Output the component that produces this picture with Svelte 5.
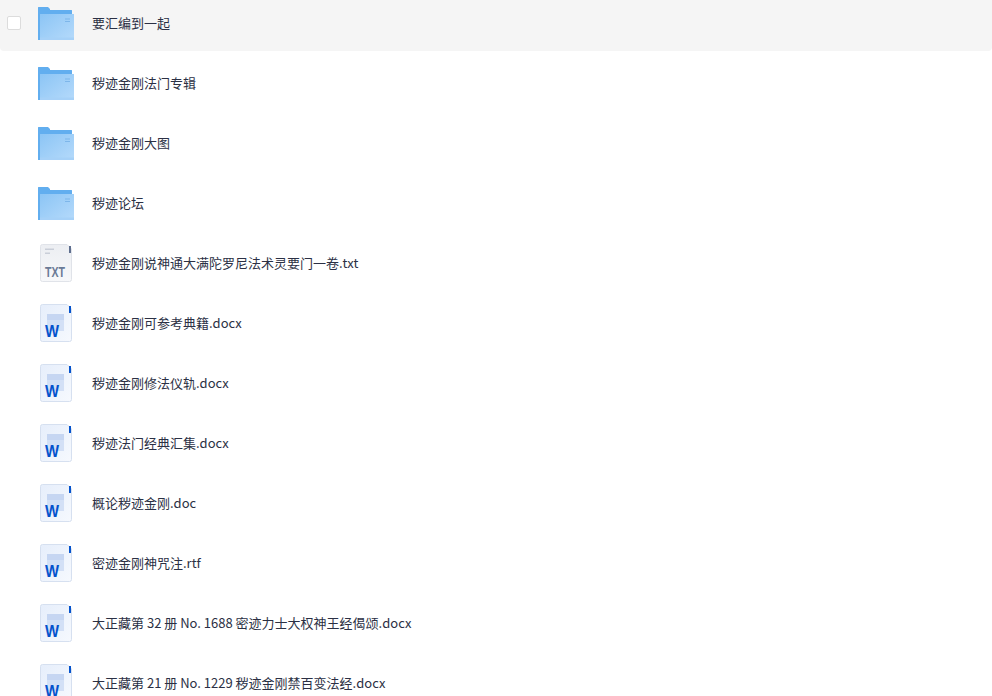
<script>
    const files = [
        { name: "要汇编到一起", type: "folder", hover: true },
        { name: "秽迹金刚法门专辑", type: "folder" },
        { name: "秽迹金刚大图", type: "folder" },
        { name: "秽迹论坛", type: "folder" },
        { name: "秽迹金刚说神通大满陀罗尼法术灵要门一卷.txt", type: "txt" },
        { name: "秽迹金刚可参考典籍.docx", type: "word" },
        { name: "秽迹金刚修法仪轨.docx", type: "word" },
        { name: "秽迹法门经典汇集.docx", type: "word" },
        { name: "概论秽迹金刚.doc", type: "word" },
        { name: "密迹金刚神咒注.rtf", type: "word" },
        { name: "大正藏第 32 册 No. 1688 密迹力士大权神王经偈颂.docx", type: "word" },
        { name: "大正藏第 21 册 No. 1229 秽迹金刚禁百变法经.docx", type: "word" }
    ];
</script>

<main>
    <svg class="defs" width="0" height="0" aria-hidden="true">
        <defs>
            <linearGradient id="folderFront" x1="0" y1="0" x2="1" y2="1">
                <stop offset="0" stop-color="#8cc5f5" />
                <stop offset="1" stop-color="#b5dafb" />
            </linearGradient>
            <linearGradient id="txtPage" x1="0" y1="0" x2="0" y2="1">
                <stop offset="0" stop-color="#eceef2" />
                <stop offset="1" stop-color="#f7f8fa" />
            </linearGradient>
            <linearGradient id="wordPage" x1="0" y1="0" x2="1" y2="1">
                <stop offset="0" stop-color="#e6eefb" />
                <stop offset="1" stop-color="#f6f9fe" />
            </linearGradient>
        </defs>
    </svg>

    <ul class="list">
        {#each files as file}
            <li class="row" class:hover={file.hover}>
                <span class="check-cell">
                    {#if file.hover}
                        <span class="check"></span>
                    {/if}
                </span>

                <span class="icon">
                    {#if file.type === "folder"}
                        <svg width="40" height="40" viewBox="0 0 40 40">
                            <path d="M2 4.500 Q2 4 2.500 4 H12 L14 6 V7 H35.500 Q36 7 36 7.500 V37 H2 Z" fill="#62aeef" />
                            <rect x="4" y="11" width="34" height="26" fill="url(#folderFront)" />
                            <rect x="4" y="34.500" width="34" height="2.500" fill="#a6d1f8" />
                            <rect x="29" y="15.500" width="5" height="1" fill="#7db6ea" />
                            <rect x="29" y="18" width="5" height="1" fill="#7db6ea" />
                        </svg>
                    {:else if file.type === "txt"}
                        <svg width="40" height="40" viewBox="0 0 40 40">
                            <path d="M4.500 3.500 Q4.500 1.500 6.500 1.500 H31 L35.500 6 V36.500 Q35.500 38.500 33.500 38.500 H6.500 Q4.500 38.500 4.500 36.500 Z" fill="url(#txtPage)" stroke="#e0e3e9" />
                            <rect x="9" y="5.500" width="9" height="1.500" fill="#c9ced8" />
                            <rect x="9" y="9.500" width="5" height="1.500" fill="#c9ced8" />
                            <rect x="33" y="3" width="2" height="7" fill="#5f6f8f" />
                            <text class="txt-label" x="9" y="34" textLength="20" lengthAdjust="spacingAndGlyphs">TXT</text>
                        </svg>
                    {:else}
                        <svg width="40" height="40" viewBox="0 0 40 40">
                            <path d="M4.500 3.500 Q4.500 1.500 6.500 1.500 H31 L35.500 6 V36.500 Q35.500 38.500 33.500 38.500 H6.500 Q4.500 38.500 4.500 36.500 Z" fill="url(#wordPage)" stroke="#d6e0f0" />
                            <rect x="11" y="11" width="17" height="17" fill="#d3e0f6" />
                            <rect x="11" y="11" width="17" height="6" fill="#c6d6f2" />
                            <rect x="33" y="3" width="2" height="7" fill="#0553cc" />
                            <text class="word-label" x="9" y="34" textLength="14" lengthAdjust="spacingAndGlyphs">W</text>
                        </svg>
                    {/if}
                </span>

                <span class="name">{file.name}</span>
            </li>
        {/each}
    </ul>
</main>

<style>
    :global(body) {
        background-color: #fff;
        overflow: hidden;
    }

    main {
        height: 696px;
        overflow: hidden;
        font-family: "Noto Sans CJK SC", "Noto Sans", sans-serif;
    }

    .defs {
        position: absolute;
    }

    .list {
        list-style: none;
        margin: -9px 0 0 0;
        padding: 0;
    }

    .row {
        display: flex;
        align-items: center;
        height: 60px;
        padding-top: 4px;
        box-sizing: border-box;
        border-radius: 4px;
    }

    .hover {
        background-color: #f5f5f5;
    }

    .check-cell {
        display: flex;
        width: 36px;
        padding-left: 7px;
        box-sizing: border-box;
    }

    .check {
        width: 12px;
        height: 12px;
        background-color: #fff;
        border: 1px solid #dcdcdc;
        border-radius: 2px;
    }

    .icon {
        display: block;
        width: 40px;
        height: 40px;
    }

    .name {
        margin-left: 16px;
        margin-bottom: 2px;
        font-size: 13px;
        color: #2b3044;
        white-space: nowrap;
    }

    .txt-label {
        font-family: "Liberation Sans", sans-serif;
        font-size: 14px;
        font-weight: 700;
        fill: #6a7a96;
    }

    .word-label {
        font-family: "Liberation Sans", sans-serif;
        font-size: 17px;
        font-weight: 700;
        fill: #0553cc;
    }
</style>
